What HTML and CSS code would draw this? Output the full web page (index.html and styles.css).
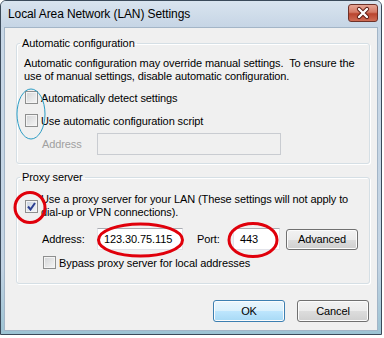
FILE: index.html
```html
<!DOCTYPE html>
<html lang="en">
<head>
  <meta charset="UTF-8" />
  <title>Local Area Network (LAN) Settings</title>
  <link rel="stylesheet" href="styles.css">
</head>
<body>
  <div class="window">
    <!-- title bar -->
    <div class="titlebar">
      <span class="title">Local Area Network (LAN) Settings</span>
      <span class="close">
        <svg width="30" height="18" viewBox="0 0 30 18">
          <path d="M11 5 L19 13 M19 5 L11 13" stroke="#5a1a12" stroke-width="4.2" stroke-linecap="round" />
          <path d="M11 5 L19 13 M19 5 L11 13" stroke="#fff" stroke-width="2.4" stroke-linecap="round" />
        </svg>
      </span>
    </div>

    <div class="client">
      <!-- automatic configuration -->
      <fieldset class="group auto">
        <legend>Automatic configuration</legend>
        <p class="note">Automatic configuration may override manual settings.&nbsp; To ensure the<br>use of manual settings, disable automatic configuration.</p>
        <div class="check first"><span class="box"></span><span>Automatically detect settings</span></div>
        <div class="check"><span class="box"></span><span>Use automatic configuration script</span></div>
        <div class="field off">
          <span class="label">Address</span>
          <span class="input wide"></span>
        </div>
      </fieldset>

      <!-- proxy server -->
      <fieldset class="group proxy">
        <legend>Proxy server</legend>
        <div class="check multi"><span class="box checked">
          <svg width="9" height="9" viewBox="0 0 9 9"><path d="M1 4.5 L3.5 7.5 L8 1" fill="none" stroke="#2b3f91" stroke-width="2" /></svg>
        </span><span>Use a proxy server for your LAN (These settings will not apply to<br>dial-up or VPN connections).</span></div>
        <div class="field">
          <span class="label">Address:</span>
          <span class="input addr">123.30.75.115</span>
          <span class="label port">Port:</span>
          <span class="input portbox">443</span>
          <button class="btn adv">Advanced</button>
        </div>
        <div class="check bypass"><span class="box"></span><span>Bypass proxy server for local addresses</span></div>
      </fieldset>

      <div class="actions">
        <button class="btn default">OK</button>
        <button class="btn">Cancel</button>
      </div>
    </div>

    <!-- hand drawn marks over the dialog -->
    <svg class="marks" width="384" height="338" viewBox="0 0 384 338">
      <ellipse cx="31" cy="114" rx="14" ry="25" fill="none" stroke="#2a9cc4" stroke-width="1" />
      <ellipse cx="30" cy="207.5" rx="15" ry="15" fill="none" stroke="#e0000b" stroke-width="3" />
      <ellipse cx="140.5" cy="240" rx="42" ry="16" fill="none" stroke="#e0000b" stroke-width="3" />
      <ellipse cx="253" cy="240" rx="24" ry="16.5" fill="none" stroke="#e0000b" stroke-width="3" />
    </svg>
  </div>
</body>
</html>
```

FILE: styles.css
```css
body {
  margin: 0;
  background: #fff;
  font-family: 'Liberation Sans', Arial, sans-serif;
  font-size: 11px;
  letter-spacing: -0.1px;
  color: #000;
  white-space: nowrap;
}

.window {
  position: relative;
  width: 382px;
  height: 335px;
  box-sizing: border-box;
  border: 1px solid #3b4a5a;
  border-radius: 6px 6px 0 0;
  background: linear-gradient(#c9d8e7, #c2d3e3 80%, #9cc3d3);
  display: flex;
  flex-direction: column;
}

.titlebar {
  height: 26px;
  display: flex;
  align-items: center;
  justify-content: space-between;
  padding: 0 3px 0 7px;
  background: linear-gradient(#d9e4ef, #c6d5e5);
  border-radius: 5px 5px 0 0;
}

.title {
  font-size: 12px;
}

.close {
  display: block;
  width: 30px;
  height: 18px;
  margin-top: -2px;
  box-sizing: border-box;
  border: 1px solid #6e3128;
  border-radius: 3px;
  background: linear-gradient(#e6a696, #d47a66 45%, #b9452f 55%, #cf6c55);
}

.close svg {
  display: block;
  margin: -1px;
}

.client {
  flex: 1;
  margin: 0 3px 3px;
  background: #f0f0f0;
  border: 1px solid #a3b5c7;
  display: flex;
  flex-direction: column;
}

.group {
  margin: 8px 7px 0 11px;
  padding: 0;
  border: 1px solid #d5dfe5;
  border-radius: 3px;
  box-shadow: inset 1px 1px 0 #fff, 1px 1px 0 #fff;
}

.group legend {
  margin-left: 3px;
  padding: 0 2px;
  line-height: 15px;
}

.proxy {
  margin-top: 6px;
  padding-bottom: 13px;
}

.auto {
  padding-bottom: 8px;
}

.note {
  margin: 6px 0 0 7px;
  line-height: 13px;
}

.check {
  display: flex;
  align-items: center;
  height: 15px;
  margin: 8px 0 0 8px;
}

.check.first {
  margin-top: 7px;
}

.check.multi {
  height: auto;
  line-height: 13px;
  margin-top: 8px;
}

.check.bypass {
  margin: 5px 0 0 26px;
}

.box {
  width: 13px;
  height: 13px;
  box-sizing: border-box;
  flex: none;
  margin-right: 3px;
  border: 1px solid #8e8f8f;
  background: linear-gradient(135deg, #d2d4d6, #f6f6f6);
  box-shadow: inset 0 0 0 1px #f4f4f4;
  display: flex;
  align-items: center;
  justify-content: center;
}

.box.checked {
  background: linear-gradient(135deg, #c9d3e0, #f3f6f9);
}

.field {
  display: flex;
  align-items: center;
  height: 22px;
  margin: 5px 0 0 25px;
}

.proxy .field {
  margin-top: 9px;
}

.label {
  width: 55px;
}

.off .label {
  color: #a0a0a0;
}

.input {
  height: 22px;
  box-sizing: border-box;
  padding: 0 6px;
  display: flex;
  align-items: center;
  background: #fff;
  border: 1px solid #e2e3ea;
  border-top-color: #abadb3;
}

.input.wide {
  width: 184px;
  background: #f0f0f0;
  border-color: #c9ccd1;
}

.input.addr {
  width: 86px;
}

.label.port {
  width: 36px;
  margin-left: 14px;
}

.input.portbox {
  width: 47px;
}

.btn {
  width: 72px;
  height: 22px;
  padding: 0;
  font: inherit;
  letter-spacing: inherit;
  color: #000;
  border: 1px solid #707070;
  border-radius: 3px;
  background: linear-gradient(#f2f2f2, #ebebeb 50%, #dddddd 50%, #cfcfcf);
  box-shadow: inset 0 0 0 1px #fcfcfc;
}

.btn.adv {
  height: 21px;
  margin-left: 6px;
}

.btn.default {
  border-color: #3c7fb1;
  background: linear-gradient(#eaf6fd, #d9f0fc 50%, #bee6fd 50%, #a7d9f5);
}

.actions {
  display: flex;
  justify-content: flex-end;
  gap: 12px;
  margin: 16px 8px 0 0;
}

.marks {
  position: absolute;
  top: -1px;
  left: -1px;
  pointer-events: none;
}
```
